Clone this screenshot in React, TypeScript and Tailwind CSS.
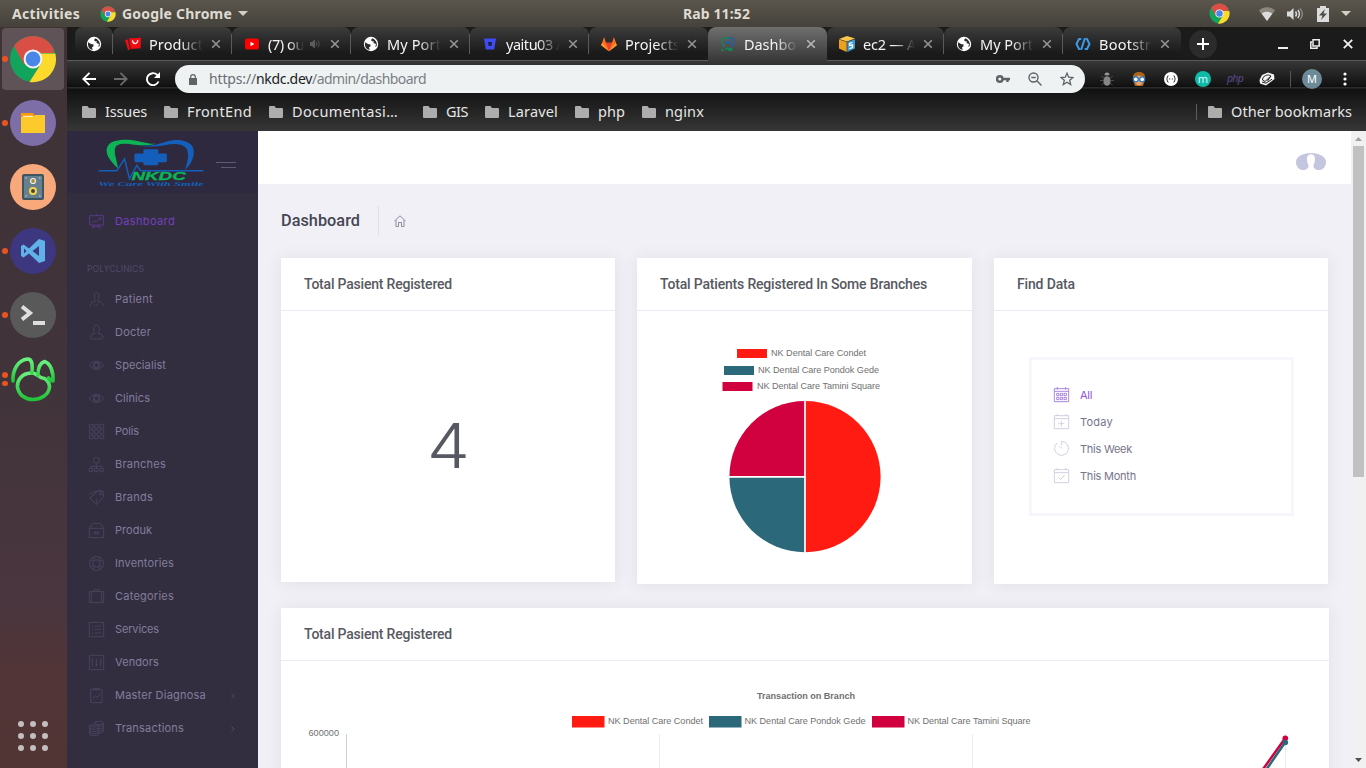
import React, { useLayoutEffect, useRef, useState } from "react";

type FitProps = { w: number; children: string; className?: string };

/** Text that spreads its letters over a given width. */
function Fit({ w, children, className = "" }: FitProps) {
  const ref = useRef<HTMLSpanElement>(null);
  const [gap, setGap] = useState(0);
  useLayoutEffect(() => {
    const el = ref.current;
    if (!el) return;
    el.style.letterSpacing = "0px";
    const natural = el.getBoundingClientRect().width;
    const next = (w - natural) / children.length;
    el.style.letterSpacing = next + "px";
    setGap(next);
  }, [w, children]);
  return (
    <span ref={ref} className={"inline-block whitespace-pre " + className} style={{ letterSpacing: gap }}>
      {children}
    </span>
  );
}

function ChromeLogo({ className }: { className: string }) {
  return (
    <svg viewBox="0 0 48 48" className={className}>
      <circle cx="24" cy="24" r="23" fill="#12a45c" />
      <path d="M24 24 14.9 29.25 5 11.1A23 23 0 0 1 44.4 13.5V18H24z" fill="#d94f45" />
      <path d="M24 24V18.5H46.3A23 23 0 0 1 20.5 46.9L33.1 27z" fill="#fdd92b" />
      <circle cx="24" cy="24" r="9.4" fill="#f4f4f4" />
      <circle cx="24" cy="24" r="7.4" fill="#4a86e8" />
    </svg>
  );
}

function Globe() {
  return (
    <svg viewBox="0 0 16 16" className="size-4 shrink-0">
      <circle cx="8" cy="8" r="7.2" fill="#fff" />
      <path d="M2.3 6.2 5 8l2.6.4-.2 2L6 11.300l.6 2.700L4 13C2 11 1.500 8.500 2.300 6.200zM9.500 2.200 8 4 9 5.200l2 .2-.6 1.500 2.600 1L12.300 11l1.400-1c.8-3-.7-6-4.200-7.800z" fill="#2b2b2b" />
    </svg>
  );
}

function Folder() {
  return (
    <svg viewBox="0 0 14 12" className="h-3 w-3.5 shrink-0" fill="#adadad">
      <path d="M1 0h4.500L7 2h6a1 1 0 0 1 1 1v8a1 1 0 0 1-1 1H1a1 1 0 0 1-1-1V1a1 1 0 0 1 1-1z" />
    </svg>
  );
}

const Cross = ({ className = "stroke-[#9a9a9a]" }: { className?: string }) => (
  <svg viewBox="0 0 10 10" className={"size-2.5 shrink-0 " + className} fill="none" strokeWidth="1.600">
    <path d="M1.200 1.200 8.800 8.800M8.800 1.200 1.200 8.800" />
  </svg>
);

const tabIcons: Record<string, React.ReactNode> = {
  globe: <Globe />,
  shop: (
    <svg viewBox="0 0 16 16" className="size-4 shrink-0" fill="#f50a12">
      <path d="m0 4 3-.5 2 10-2 .5zM4 2.500l12-.8-.4 10.600-9.800.7z" />
      <path d="M7.500 4.200c.3 4.500 5.300 4.500 5.200-.2" fill="none" stroke="#fff" strokeWidth="1.200" />
    </svg>
  ),
  youtube: (
    <svg viewBox="0 0 16 16" className="size-4 shrink-0">
      <rect x="1" y="2.500" width="14" height="11" rx="2.500" fill="#f00" />
      <path d="M6.500 5.700v4.600L10.300 8z" fill="#fff" />
    </svg>
  ),
  bitbucket: (
    <svg viewBox="0 0 16 16" className="size-4 shrink-0">
      <path d="M2 2.500h12l-1.800 11H3.800z" fill="#3d4cf5" />
      <path d="M6 6h4l-.6 4H6.600z" fill="#20203a" />
    </svg>
  ),
  gitlab: (
    <svg viewBox="0 0 16 16" className="size-4 shrink-0">
      <path d="M8 15.200.2 9.200 3.100 1l1.900 5.700h6L12.900 1l2.900 8.200z" fill="#fc6d26" />
      <path d="M8 15.200 5 6.700h6z" fill="#e24329" />
      <path d="M8 15.200.2 9.200l.9-2.500zM8 15.200l7.800-6-.9-2.500z" fill="#fca326" />
    </svg>
  ),
  nkdc: (
    <svg viewBox="0 0 16 16" className="size-4 shrink-0" fill="none" strokeWidth="1.400">
      <path d="M9 2.600C6 1.200 2 2 2 4.800S4 8 4 11" stroke="#0b8a56" />
      <path d="M9 2.600c3-1.400 5.500-.2 5.200 2.600S12 9 11.800 11" stroke="#1762b8" />
      <circle cx="8" cy="6.500" r="1.800" fill="#1762b8" stroke="none" />
      <path d="M1 14h3M5 12.500h7M8 14h5" stroke="#0b8a56" />
    </svg>
  ),
  aws: (
    <svg viewBox="0 0 16 16" className="size-4 shrink-0">
      <path d="m0 3 8-3 8 2.500-8 3z" fill="#fbc64b" />
      <path d="M0 3.500 7.700 6v10L0 12.500z" fill="#efa01c" />
      <path d="M8.300 6 16 3.300v9.200L8.300 16z" fill="#3a9bd8" />
      <path d="M13.500 6.500 10.500 7.500v2l3-.5v2.500l-3.200 1.200" fill="none" stroke="#fff" strokeWidth="1.300" />
    </svg>
  ),
  bootstrap: (
    <svg viewBox="0 0 16 16" className="size-4 shrink-0" fill="none" stroke="#3e9bea" strokeWidth="2" strokeLinejoin="round" strokeLinecap="round">
      <path d="M5.500 3H4L1.500 8 4 13h.5M11.500 3h.5l2.500 5-2.500 5h-1.500M9.600 3 6.400 13" />
    </svg>
  ),
};

type Tab = { icon: string; label: string; w: number; width: string; active?: boolean; audio?: boolean };
const tabs: Tab[] = [
  { icon: "shop", label: "Product", w: 54, width: "w-[119px]" },
  { icon: "youtube", label: "(7) ou", w: 36, width: "w-[119px]", audio: true },
  { icon: "globe", label: "My Port", w: 54, width: "w-[119px]" },
  { icon: "bitbucket", label: "yaitu03 /", w: 55, width: "w-[119px]" },
  { icon: "gitlab", label: "Projects", w: 55, width: "w-[119px]" },
  { icon: "nkdc", label: "Dashbo", w: 52, width: "w-[119px]", active: true },
  { icon: "aws", label: "ec2 — A", w: 53, width: "w-[117px]" },
  { icon: "globe", label: "My Port", w: 53, width: "w-[119px]" },
  { icon: "bootstrap", label: "Bootstr", w: 52, width: "w-[118px]" },
];

function TabItem({ t, last }: { t: Tab; last: boolean }) {
  return (
    <div
      className={
        "flex shrink-0 items-center self-start rounded-t-lg pl-3 " +
        t.width +
        (t.active
          ? " h-[34px] bg-linear-to-b from-[#707070] to-[#383838] pb-px"
          : " h-[33px] bg-linear-to-b from-[#3c3c3c] to-[#1a1a1a] to-80%")
      }
    >
      {tabIcons[t.icon]}
      <div className="ml-2 flex h-6 min-w-0 flex-1 items-center">
        <div className="w-full whitespace-nowrap text-[14.500px] leading-5 text-[#f4f4f4] [mask-image:linear-gradient(to_right,black_58%,transparent_100%)]">
          <Fit w={t.w}>{t.label}</Fit>
        </div>
        {t.audio && (
          <svg viewBox="0 0 10 10" className="mr-1 ml-1.5 size-2.5 shrink-0" fill="#5f5f5f" stroke="#5f5f5f" strokeWidth=".8">
            <path d="M0 3.500h2l2.500-2.500v8L2 6.500H0z" />
            <path d="M6 3c1 1.300 1 2.700 0 4M7.800 1.500c1.800 2.300 1.800 4.700 0 7" fill="none" />
          </svg>
        )}
      </div>
      <span className="ml-2 flex">
        <Cross className={t.active ? "stroke-[#b9b9b9]" : "stroke-[#949494]"} />
      </span>
      <span className={"ml-2.5 h-5 w-px shrink-0 " + (!last && !t.active ? "bg-[#5a5a5a]" : "")} />
    </div>
  );
}

const bookmarks: [string, number, string][] = [
  ["Issues", 42, "w-[82px]"],
  ["FrontEnd", 65, "w-[105px]"],
  ["Documentasi…", 106, "w-[154px]"],
  ["GIS", 22, "w-[62px]"],
  ["Laravel", 50, "w-[90px]"],
  ["php", 27, "w-[67px]"],
  ["nginx", 39, "w-[80px]"],
];

const Slot = ({ children, className = "w-8" }: { children?: React.ReactNode; className?: string }) => (
  <div className={"flex shrink-0 items-center justify-center " + className}>{children}</div>
);

function Browser() {
  return (
    <div className="flex h-[104px] shrink-0 flex-col bg-[#1b1b1b]">
      <div className="flex h-[34px] shrink-0 items-center bg-[linear-gradient(transparent_33px,#5a5a5a_33px)] pl-2">
        <div className="flex h-[33px] w-[38px] shrink-0 items-center self-start rounded-t-lg bg-linear-to-b from-[#3c3c3c] to-[#1a1a1a] to-80% pl-[11px]">
          <Globe />
          <span className="ml-[10px] h-5 w-px bg-[#5a5a5a]" />
        </div>
        {tabs.map((t, i) => (
          <TabItem key={i} t={t} last={i === tabs.length - 1 || i === 4} />
        ))}
        <div className="ml-2 flex size-7 items-center justify-center rounded-full bg-[#2b2b2b]">
          <svg viewBox="0 0 12 12" className="size-3" stroke="#fff" strokeWidth="2">
            <path d="M6 0v12M0 6h12" />
          </svg>
        </div>
        <div className="ml-[61px] mt-2 h-0.5 w-[10px] bg-[#eee]" />
        <svg viewBox="0 0 10 10" className="ml-[22px] size-2.5" fill="none" stroke="#eee" strokeWidth="1.500">
          <path d="M3 .8h6.200V7H3zM2 3H.8v6.200H7V8" />
        </svg>
        <svg viewBox="0 0 10 10" className="ml-[23px] size-2.5" stroke="#eee" strokeWidth="1.900">
          <path d="m.8.8 8.400 8.400M9.200.8.8 9.200" />
        </svg>
      </div>
      <div className="flex h-[70px] flex-col bg-[linear-gradient(#373737_0px,#111_25px,#0b0b0b_26px,#2c2c2c_26px,#2c2c2c_27px,#111_28px,#353535_69px)]">
        <div className="flex h-9 items-center">
          <svg viewBox="0 0 14 14" className="ml-[15px] size-3.5" fill="none" stroke="#fff" strokeWidth="1.800">
            <path d="M14 7H1.500M7.500.8 1.300 7l6.200 6.200" />
          </svg>
          <svg viewBox="0 0 14 14" className="ml-[18px] size-3.5" fill="none" stroke="#6b6b6b" strokeWidth="1.800">
            <path d="M0 7h12.500M6.500.8 12.700 7l-6.200 6.200" />
          </svg>
          <svg viewBox="0 0 14 14" className="ml-[18px] size-3.5" fill="none" stroke="#fff" strokeWidth="1.900">
            <path d="M12.500 9.500A6 6 0 1 1 11 2.700l1.500 1.500" />
            <path d="M14 0v6H8z" fill="#fff" stroke="none" />
          </svg>
          <div className="ml-[15px] flex h-7 w-[910px] shrink-0 items-center rounded-full bg-[#eef2f3] pl-3.5 text-[14px]">
            <svg viewBox="0 0 8 11" className="h-[11px] w-2" fill="#5f6368">
              <path d="M0 4h8v7H0z" />
              <path d="M1.700 4.500V3a2.300 2.300 0 0 1 4.600 0v1.500" fill="none" stroke="#5f6368" strokeWidth="1.200" />
            </svg>
            <Fit w={47} className="ml-3 -mt-px text-[#6a6e72]">https://</Fit>
            <Fit w={56} className="-mt-px text-[#202124]">nkdc.dev</Fit>
            <Fit w={114} className="-mt-px text-[#7b7f83]">/admin/dashboard</Fit>
            <div className="flex-1" />
            <svg viewBox="0 0 14 8" className="h-2 w-3.5" fill="none" stroke="#5f6368" strokeWidth="2">
              <circle cx="3.800" cy="4" r="2.700" strokeWidth="2.400" />
              <path d="M6 4h8M11.500 4v3" strokeWidth="2.400" />
            </svg>
            <svg viewBox="0 0 14 14" className="ml-[18px] size-3.5" fill="none" stroke="#5f6368" strokeWidth="1.400">
              <circle cx="5.500" cy="5.500" r="4.500" />
              <path d="M3.300 5.500h4.400M8.800 8.800l4.700 4.700" />
            </svg>
            <svg viewBox="0 0 14 14" className="ml-[18px] mr-[11px] size-3.5" fill="none" stroke="#5f6368" strokeWidth="1.300">
              <path d="m7 1.200 1.700 4 4.300.3-3.300 2.800 1 4.300L7 10.300l-3.700 2.300 1-4.300L1 5.500l4.300-.3z" />
            </svg>
          </div>
          <Slot className="ml-1.5 w-8">
            <svg viewBox="0 0 14 14" className="size-3.5" fill="#777">
              <path d="M1 4l3 2M13 4l-3 2M0 8.500h3M14 8.500h-3M1.500 13 4 11M12.500 13 10 11" stroke="#4a4a4a" />
              <ellipse cx="7" cy="9" rx="3.600" ry="4.800" fill="#858585" />
              <path d="M4.500 3.200a2.500 2.700 0 0 1 5 0z" fill="#999" />
            </svg>
          </Slot>
          <Slot>
            <svg viewBox="0 0 14 14" className="size-3.5">
              <path d="M1 8C0 2 3 0 7 0s7 2 6 8l-2 6H3z" fill="#a8651b" />
              <ellipse cx="7" cy="8.500" rx="4.500" ry="5" fill="#e9a06c" />
              <circle cx="3.800" cy="7.300" r="2.500" fill="#fff" stroke="#2b78c5" strokeWidth="1.300" />
              <circle cx="10.200" cy="7.300" r="2.500" fill="#fff" stroke="#2b78c5" strokeWidth="1.300" />
            </svg>
          </Slot>
          <Slot>
            <svg viewBox="0 0 14 14" className="size-3.5">
              <circle cx="7" cy="7" r="7" fill="#fff" />
              <path d="M4.500 3.800c-2 0-.5 2.700-2 3.200 1.500.5 0 3.200 2 3.200M9.500 3.800c2 0 .5 2.700 2 3.200-1.500.5 0 3.200-2 3.200M5.200 7h1M7.800 7h1" fill="none" stroke="#222" />
            </svg>
          </Slot>
          <Slot>
            <span className="flex size-4 items-center justify-center rounded-full bg-[#10b9a8] pb-0.5 text-[11px] leading-none text-[#d8fff8]">m</span>
          </Slot>
          <Slot>
            <Fit w={16} className="text-[10.500px] italic text-[#5a4a8c]">php</Fit>
          </Slot>
          <Slot>
            <svg viewBox="0 0 16 14" className="h-3.5 w-4">
              <path d="M3 3 9 .5l6 2L15.500 7 7 13.500l-6-2L.5 8z" fill="#f4f4f4" />
              <path d="M4 5.500c3-3 6-3 8-1.500L6 9.500 3.500 8zM12 4 8.500 9M3 10l4 1.200 6-4" fill="none" stroke="#222" />
            </svg>
          </Slot>
          <Slot className="w-3.5">
            <span className="h-4 w-px bg-[#555]" />
          </Slot>
          <Slot className="w-[30px]">
            <span className="flex size-5 items-center justify-center rounded-full bg-[#6d8a98] text-[11px] text-white">M</span>
          </Slot>
          <Slot className="w-9">
            <svg viewBox="0 0 4 14" className="h-3.5 w-1" fill="#fff">
              <circle cx="2" cy="2" r="1.600" />
              <circle cx="2" cy="7" r="1.600" />
              <circle cx="2" cy="12" r="1.600" />
            </svg>
          </Slot>
        </div>
        <div className="flex h-[30px] items-center pl-[15px] text-[14.500px] text-[#e6e6e6]">
          {bookmarks.map(([label, w, width]) => (
            <div key={label} className={"flex shrink-0 items-center gap-[9px] " + width}>
              <Folder />
              <Fit w={w}>{label}</Fit>
            </div>
          ))}
          <div className="flex-1" />
          <span className="mr-[11px] h-4 w-px bg-[#5d5d5d]" />
          <div className="mr-3.5 flex items-center gap-[9px]">
            <Folder />
            <Fit w={121}>Other bookmarks</Fit>
          </div>
        </div>
      </div>
    </div>
  );
}

function TopBar() {
  return (
    <div className="flex h-[27px] shrink-0 items-center bg-linear-to-b from-[#5b564d] to-[#44423b] pl-3 text-[14px] font-bold text-[#dfdbd2]">
      <Fit w={68}>Activities</Fit>
      <ChromeLogo className="ml-5 size-4" />
      <Fit w={110} className="ml-1.5">Google Chrome</Fit>
      <svg viewBox="0 0 10 5" className="ml-1.5 h-[5px] w-[10px]" fill="#d3cfc6"><path d="M0 0h10L5 5z" /></svg>
      <Fit w={67} className="ml-[435px]">Rab 11:52</Fit>
      <ChromeLogo className="ml-[459px] size-[21px]" />
      <svg viewBox="0 0 16 14" className="ml-[29px] h-3.5 w-4">
        <path d="M8 14 0 3.500c4-4.500 12-4.500 16 0z" fill="#8b877e" />
        <path d="M8 14 2.700 6.500c3-2.500 7.600-2.500 10.600 0z" fill="#dcdcdc" />
      </svg>
      <svg viewBox="0 0 16 14" className="ml-3 h-3.5 w-4" fill="#dcdcdc">
        <path d="M0 4.500h3L6.500 1v12L3 9.500H0z" />
        <path d="M8.500 4.500c1.200 1.500 1.200 3.500 0 5M10.800 3c2 2.500 2 5.500 0 8" fill="none" stroke="#dcdcdc" strokeWidth="1.400" />
        <path d="M13 1.500c3 3.500 3 7.500 0 11" fill="none" stroke="#8b877e" strokeWidth="1.400" />
      </svg>
      <svg viewBox="0 0 12 16" className="ml-3.5 h-4 w-3">
        <path d="M3 0h6v2h3v14H0V2h3z" fill="#dcdcdc" />
        <path d="M8 3 2 9.500h3.500L4 14l6-6.500H6.500z" fill="#4f4b44" />
      </svg>
      <svg viewBox="0 0 10 5" className="ml-3 h-[5px] w-[10px]" fill="#d3cfc6"><path d="M0 0h10L5 5z" /></svg>
    </div>
  );
}

function DockItem({ dots = 0, selected = false, children }: { dots?: number; selected?: boolean; children: React.ReactNode }) {
  return (
    <div className="flex h-16 w-[67px] shrink-0 items-center">
      <div className={"flex h-[62px] w-[62px] items-center rounded ml-0.5 " + (selected ? "bg-[#605357]" : "")}>
        <div className="flex w-2 shrink-0 flex-col items-start gap-[3px]">
          {Array.from({ length: dots }, (_, i) => (
            <span key={i} className="size-[5.500px] rounded-full bg-[#e95420]" />
          ))}
        </div>
        {children}
      </div>
    </div>
  );
}

function Dock() {
  return (
    <div className="flex w-[67px] shrink-0 flex-col bg-[linear-gradient(#3f3336_0%,#40333a_45%,#4a363e_78%,#523536_88%,#513434_100%)]">
      <DockItem dots={1} selected><ChromeLogo className="size-12 -ml-px" /></DockItem>
      <DockItem dots={1}>
        <div className="flex size-[46px] items-center justify-center rounded-full bg-[#7d6ea8]">
          <svg viewBox="0 0 24 20" className="h-5 w-6">
            <path d="M0 0h12l2 3v4H0z" fill="#f99a09" />
            <path d="M0 4h12l2-2h10v18H0z" fill="#fdca2b" />
            <path d="M2 3.300h10" stroke="#fff" />
          </svg>
        </div>
      </DockItem>
      <DockItem>
        <div className="flex size-[46px] items-center justify-center rounded-full bg-[#f7a97b]">
          <svg viewBox="0 0 22 26" className="h-[26px] w-[22px]">
            <rect width="22" height="26" rx="2" fill="#3f5562" />
            <rect x="2" y="2" width="18" height="22" fill="#67808d" />
            <circle cx="11" cy="7" r="2.500" fill="#a88b3a" stroke="#eee" strokeWidth="1.200" />
            <circle cx="11" cy="17" r="3" fill="#444" stroke="#f7d44d" strokeWidth="2" />
            <path d="M3.500 4h1.500M17 4h1.500M3.500 22h1.500M17 22h1.500" stroke="#ccd" />
          </svg>
        </div>
      </DockItem>
      <DockItem dots={1}>
        <div className="flex size-[46px] items-center justify-center rounded-full bg-[#3d3780]">
          <svg viewBox="0 0 24 24" className="size-6" fill="#5fb1e8" fillRule="evenodd">
            <path d="M18 0l6 2v20l-6 2L8 14.500 2.500 18.500 0 17V7l2.500-1.500L8 9.500zM18 7l-6.500 5 6.500 5zM3 9.500v5L5.500 12z" />
          </svg>
        </div>
      </DockItem>
      <DockItem dots={1}>
        <div className="flex size-[46px] items-center justify-center rounded-full bg-[#595959]">
          <svg viewBox="0 0 24 20" className="h-5 w-6" fill="none" stroke="#dedede" strokeWidth="4">
            <path d="m1 1.500 8 6.500-8 6.500M12 18h12" />
          </svg>
        </div>
      </DockItem>
      <DockItem dots={2}>
        <svg viewBox="0 0 46 46" className="size-[46px]" fill="none" strokeWidth="3.600" strokeLinejoin="round" strokeLinecap="round">
          <defs>
            <linearGradient id="leaf" x1="0" y1="0" x2="0" y2="1">
              <stop offset="0" stopColor="#6bf07f" />
              <stop offset="1" stopColor="#21c43a" />
            </linearGradient>
          </defs>
          <g stroke="url(#leaf)">
            <path d="M26 18.500C24 16.500 20 17 17.500 17.500 11 19 7 25 7.500 31c1 8 8 12.500 15.500 12.500s16-4.500 16.500-12.500c0-3-1-5-3-7-3-3-5-1-7-3.500z" />
            <path d="M3 25C2.500 14 8 4 17.500 3c5 0 5 6 4.500 14" />
            <path d="M28 19c0-6 2-12 6.500-13.500 6 2 9 10 8.500 19.500-3 0-3-1.500-4.500-3" />
          </g>
        </svg>
      </DockItem>
      <div className="flex-1" />
      <div className="mb-[17px] ml-[18px] grid w-[30px] grid-cols-3 gap-1.5">
        {Array.from({ length: 9 }, (_, i) => (
          <span key={i} className="size-1.5 rounded-full bg-[#c4bfbf]" />
        ))}
      </div>
    </div>
  );
}

function Logo() {
  return (
    <svg viewBox="290 20 330 160" className="ml-[29px] mt-[6px] h-[53px] w-[110px] shrink-0">
      <path d="M355 115C328 88 316 70 323 50 331 30 365 26 395 29c30 4 50 13 75 11-30 8-52 5-75 2-30-4-47 0-49 15-2 20 7 33 9 58z" fill="#0cb455" />
      <path d="M415 46c45 2 65-6 85-12 25-8 60-8 78 11 14 17 4 55-20 73 8-23 14-48 2-66-15-14-40-12-60-8-30 6-60 6-85 2z" fill="#135fbb" />
      <rect x="432" y="57" width="45" height="48" rx="4" fill="#135fbb" />
      <rect x="405" y="70" width="98" height="26" rx="4" fill="#135fbb" />
      <text x="396" y="150" textLength="164" lengthAdjust="spacingAndGlyphs" fill="#0cb455" stroke="#0cb455" fontSize="34" fontWeight="bold" fontStyle="italic" fontFamily="Liberation Sans">NKDC</text>
      <path d="M297 122h55l23-36 15 60 22-40 12 16h189" fill="none" stroke="#135fbb" strokeWidth="4.500" />
      <text x="296" y="168" textLength="318" lengthAdjust="spacingAndGlyphs" fill="#135fbb" fontSize="21" fontWeight="bold" fontStyle="italic" fontFamily="Liberation Serif">We Care With Smile</text>
    </svg>
  );
}

const eye = (
  <>
    <path d="M1 22C12 6 33 6 44 22 33 38 12 38 1 22z" />
    <circle cx="22.500" cy="22" r="10" />
    <circle cx="22.500" cy="22" r="7" />
  </>
);

const menuIcons: Record<string, React.ReactNode> = {
  board: <path d="M1 5h43M2 5v28h41V5M22 0v5M10 44l4-11M34 44l-4-11M12 38h20M8 26l8-6 6 4 13-12M29 12h6v6" />,
  patient: <path d="M16 14c0-17 14-17 14 0 0 9-3 8-3 14M16 14c0 9 3 8 3 14-8 2-15 2-15 15M27 28c9 2 15 2 15 15M14 38l6 5 8-9" />,
  user: <path d="M22 1c-11 0-10 19-4 24-10 2-15 5-15 13 4 6 35 6 39 0 0-8-5-11-15-13 6-5 7-24-5-24z" />,
  eye,
  grid: <path d="M1 1h11v11H1zM17 1h11v11H17zM33 1h11v11H33zM1 17h11v11H1zM17 17h11v11H17zM33 17h11v11H33zM1 33h11v11H1zM17 33h11v11H17zM33 33h11v11H33z" />,
  tree: (
    <>
      <circle cx="22.500" cy="10" r="9" />
      <path d="M22 19v15M6 34v-6h33v6M1 34h10v10H1zM17 34h10v10H17zM33 34h10v10H33z" />
    </>
  ),
  tag: (
    <>
      <path d="M0 12C12 5 30 0 42 4l2 16-22 24L2 24 26 4l16 0M2 24l18-16M22 44V26" />
      <circle cx="35" cy="12" r="3" />
    </>
  ),
  box: <path d="M1 16h43v28H1zM1 16 11 1h23l10 15M15 27h14v5H15z" />,
  ring: (
    <>
      <circle cx="22.500" cy="22.500" r="21" />
      <circle cx="22.500" cy="22.500" r="11" />
      <path d="M12 5l5 9M33 5l-5 9M12 40l5-9M33 40l-5-9M5 12l9 5M5 33l9-5M40 12l-9 5M40 33l-9-5" />
    </>
  ),
  case: <path d="M1 8h43v33H1zM15 8V2h15v6M7 8v33M38 8v33" />,
  list: <path d="M1 1h43v43H1zM9 12h3M17 12h19M9 22h3M17 22h19M9 33h3M17 33h19" />,
  sliders: <path d="M1 1h43v43H1zM10 10v24M22 10v24M35 10v24M7 16h6M19 30h7M32 20h6" />,
  clip: <path d="M5 5h34v39H5zM13 5V2h18v3M12 32l7-9 6 5 8-11" />,
  coins: <path d="M18 3c7-4 24-2 25 3v26c-4 4-10 4-14 3M18 3v5M18 8c6 5 20 4 25 0M2 14c3-4 22-4 26 0v27c-5 5-22 4-26 0zM2 14c4 5 22 5 26 0M2 21c4 5 22 5 26 0M2 28c4 5 22 5 26 0M2 35c4 5 22 5 26 0M29 15c5 1 10 0 14-2M29 22c5 1 10 0 14-2M29 29c5 1 10 0 14-2" />,
  calendar: <path d="M1 5h43v39H1zM1 13h43M10 0v8M35 0v8M8 19h7v7H8zM19 19h7v7h-7zM30 19h7v7h-7zM8 31h7v7H8zM19 31h7v7h-7zM30 31h7v7h-7z" />,
  plus: <path d="M1 5h43v39H1zM1 14h43M10 0v6M35 0v6M22 20v18M13 29h18" />,
  timer: <path d="M9 6a21 21 0 1 0 14-5v11M16 14l8 8" />,
  check: <path d="M1 5h43v39H1zM1 14h43M10 0v6M35 0v6M13 28l7 7 12-14" />,
};

const LineIcon = ({ name, className }: { name: string; className: string }) => (
  <svg viewBox="0 0 45 45" className={"size-[15px] shrink-0 overflow-visible " + className} fill="none" strokeWidth="2.800">
    {menuIcons[name]}
  </svg>
);

const menu: [string, string, number, boolean?][] = [
  ["patient", "Patient", 38],
  ["user", "Docter", 36],
  ["eye", "Specialist", 51],
  ["eye", "Clinics", 35],
  ["grid", "Polis", 24],
  ["tree", "Branches", 51],
  ["tag", "Brands", 38],
  ["box", "Produk", 37],
  ["ring", "Inventories", 59],
  ["case", "Categories", 59],
  ["list", "Services", 44],
  ["sliders", "Vendors", 44],
  ["clip", "Master Diagnosa", 91, true],
  ["coins", "Transactions", 69, true],
];

function Sidebar() {
  return (
    <div className="flex w-[191px] shrink-0 flex-col bg-[#322e3f] font-['Inter',sans-serif] text-[11px]">
      <div className="flex h-[62px] shrink-0 bg-[#2e293e]">
        <Logo />
        <div className="ml-[10px] mt-[31px] flex w-5 flex-col items-end gap-1">
          <span className="h-px w-5 bg-[#5f5a75]" />
          <span className="h-px w-[15px] bg-[#5f5a75]" />
        </div>
      </div>
      <div className="mt-[12px] flex h-[33px] shrink-0 items-center pl-[22px]">
        <LineIcon name="board" className="stroke-[#5a3a8c]" />
        <Fit w={60} className="ml-[11px] text-[#7440bd]">Dashboard</Fit>
      </div>
      <div className="mt-[25px] flex h-[12px] shrink-0 items-center pl-5 text-[8.500px] text-[#4f4a67]">
        <Fit w={57}>POLYCLINICS</Fit>
      </div>
      <div className="mt-2">
        {menu.map(([icon, label, w, more]) => (
          <div key={label} className="flex h-[33px] items-center pl-[22px]">
            <LineIcon name={icon} className="stroke-[#494460]" />
            <Fit w={w} className="ml-[11px] text-[#827d9c]">{label}</Fit>
            {more && (
              <svg viewBox="0 0 4 6" className="ml-auto mr-[23px] h-1.5 w-1" fill="none" stroke="#4f4a68">
                <path d="M.5.500 3 3 .5 5.500" />
              </svg>
            )}
          </div>
        ))}
      </div>
    </div>
  );
}

function Card({ title, w, className, children }: { title: string; w: number; className: string; children: React.ReactNode }) {
  return (
    <div className={"flex shrink-0 flex-col bg-white shadow-[0_1px_15px_1px_rgba(69,65,78,0.08)] " + className}>
      <div className="flex h-[53px] shrink-0 items-center border-b border-[#ebe9f2] px-[23px] font-['Roboto',sans-serif] text-[14px] font-medium text-[#575962]">
        <Fit w={w}>{title}</Fit>
      </div>
      {children}
    </div>
  );
}

const svgText = { fontFamily: "Liberation Sans, sans-serif", fontSize: 9.1, fill: "#707070" };

function Pie() {
  const rows = [
    { c: "#ff1a12", x: 737, y: 349, tx: 771, w: 95, label: "NK Dental Care Condet" },
    { c: "#2a687a", x: 724, y: 366, tx: 758, w: 121, label: "NK Dental Care Pondok Gede" },
    { c: "#d1003f", x: 722.5, y: 382, tx: 757, w: 123, label: "NK Dental Care Tamini Square" },
  ];
  return (
    <svg viewBox="637 311 335 273" className="h-[273px] w-[335px]">
      {rows.map((r) => (
        <g key={r.label}>
          <rect x={r.x} y={r.y} width="30" height="9" fill={r.c} />
          <text x={r.tx} y={r.y + 7} textLength={r.w} {...svgText}>{r.label}</text>
        </g>
      ))}
      <path d="M805 476.700v-75.600a75.600 75.600 0 0 1 0 151.200z" fill="#ff1a12" />
      <path d="M805 476.700v75.600a75.600 75.600 0 0 1-75.600-75.600z" fill="#2a687a" />
      <path d="M805 476.700h-75.600a75.600 75.600 0 0 1 75.600-75.600z" fill="#d1003f" />
      <path d="M805 400v154M728 476.900h77" stroke="#fff" strokeWidth="1.700" />
    </svg>
  );
}

function LineChart() {
  const legend = [
    { c: "#ff1a12", x: 572, tx: 608, w: 95, label: "NK Dental Care Condet" },
    { c: "#2a687a", x: 709, tx: 744.5, w: 121, label: "NK Dental Care Pondok Gede" },
    { c: "#d1003f", x: 872, tx: 907.5, w: 123, label: "NK Dental Care Tamini Square" },
  ];
  return (
    <svg viewBox="281 661 1048 107" className="h-[107px] w-[1048px]">
      <text x="757" y="699" textLength="98" {...svgText} fontWeight="bold">Transaction on Branch</text>
      {legend.map((l) => (
        <g key={l.label}>
          <rect x={l.x} y="716" width="32.500" height="11.500" fill={l.c} />
          <text x={l.tx} y="724" textLength={l.w} {...svgText}>{l.label}</text>
        </g>
      ))}
      <text x="308.500" y="736" textLength="30.500" {...svgText}>600000</text>
      <path d="M346.500 734v40" stroke="#d0d0d0" />
      <path d="M659.500 734v40M972.500 734v40M1285.500 734v40" stroke="#ededed" />
      <path d="M1285 738.500 1261 772" stroke="#d1003f" strokeWidth="2.500" />
      <path d="M1285 742.500 1264 773" stroke="#2a687a" strokeWidth="2.500" />
      <circle cx="1285.300" cy="738.300" r="2.800" fill="#d1003f" />
      <circle cx="1285.300" cy="742.500" r="2.800" fill="#2a687a" />
    </svg>
  );
}

const filters: [string, string, number][] = [
  ["calendar", "All", 12],
  ["plus", "Today", 33],
  ["timer", "This Week", 52],
  ["check", "This Month", 56],
];

function Content() {
  return (
    <div className="flex w-[1093px] shrink-0 flex-col bg-[#f1f0f6]">
      <div className="flex h-[53px] shrink-0 items-center justify-end bg-white pr-[25px]">
        <svg viewBox="0 0 30 17" className="mt-[7px] h-[17px] w-[30px]">
          <path d="M15 0C7 0 0 3.500 0 9c0 4.500 3 8 7 8 3 0 5.500-1.500 5.500-4 0-2-1.500-3-1.500-7C11 3 12.500 1.300 15 1.300S19 3 19 6c0 4-1.500 5-1.500 7 0 2.500 2.500 4 5.500 4 4 0 7-3.500 7-8C30 3.500 23 0 15 0z" fill="#c4c5de" />
        </svg>
      </div>
      <div className="mt-[22px] flex h-[30px] shrink-0 items-center pl-[23px] font-['Roboto',sans-serif] text-[16.250px] font-medium text-[#454652]">
        <Fit w={79}>Dashboard</Fit>
        <span className="ml-[18px] h-[30px] w-px bg-[#e1e0ea]" />
        <svg viewBox="0 0 12 12" className="ml-[15px] size-3" fill="none" stroke="#8d8b9e">
          <path d="M.5 6 6 .8 11.500 6M2 5v6.500h2.500v-4h3v4H10V5" />
        </svg>
      </div>
      <div className="mt-[22px] flex items-start gap-[22px] pl-[23px]">
        <Card title="Total Pasient Registered" w={148} className="h-[324px] w-[334px]">
          <div className="flex flex-1 items-center justify-center pb-px font-['Inter',sans-serif] text-[62px] font-light leading-none text-[#575962]">
            <span className="scale-x-110">4</span>
          </div>
        </Card>
        <Card title="Total Patients Registered In Some Branches" w={267} className="h-[326px] w-[335px]">
          <Pie />
        </Card>
        <Card title="Find Data" w={58} className="h-[326px] w-[334px]">
          <div className="ml-[35px] mt-[46px] flex h-[159px] w-[265px] flex-col border-[3px] border-[#f7f6fc] pl-[22px] pt-[22px] font-['Inter',sans-serif] text-[11px]">
            {filters.map(([icon, label, w], i) => (
              <div key={label} className="flex h-[27px] items-center">
                <LineIcon name={icon} className={i === 0 ? "-mt-0.5 stroke-[#a57fd8]" : "-mt-0.5 stroke-[#cfcce0]"} />
                <Fit w={w} className={"ml-[11px] " + (i === 0 ? "text-[#9150d8]" : "text-[#76748a]")}>{label}</Fit>
              </div>
            ))}
          </div>
        </Card>
      </div>
      <div className="mt-6 flex h-40 pl-[23px]">
        <Card title="Total Pasient Registered" w={148} className="h-[170px] w-[1048px]">
          <LineChart />
        </Card>
      </div>
    </div>
  );
}

function ScrollBar() {
  return (
    <div className="flex w-[15px] shrink-0 flex-col items-center bg-[#f1f1f1]">
      <svg viewBox="0 0 7 4" className="mt-1.5 h-1 w-[7px] shrink-0" fill="#a0a0a0"><path d="M0 4h7L3.500 0z" /></svg>
      <div className="mt-[5px] h-[331px] w-[11px] shrink-0 bg-[#c1c1c1]" />
      <div className="flex-1" />
      <svg viewBox="0 0 7 4" className="mb-1.5 h-1 w-[7px]" fill="#505050"><path d="M0 0h7L3.500 4z" /></svg>
    </div>
  );
}

export default function App() {
  return (
    <div className="flex h-[768px] w-[1366px] flex-col overflow-hidden font-['Noto_Sans',sans-serif]">
      <TopBar />
      <div className="flex h-[741px]">
        <Dock />
        <div className="flex min-w-0 flex-1 flex-col overflow-hidden">
          <Browser />
          <div className="flex h-[637px] overflow-hidden">
            <Sidebar />
            <Content />
            <ScrollBar />
          </div>
        </div>
      </div>
    </div>
  );
}
